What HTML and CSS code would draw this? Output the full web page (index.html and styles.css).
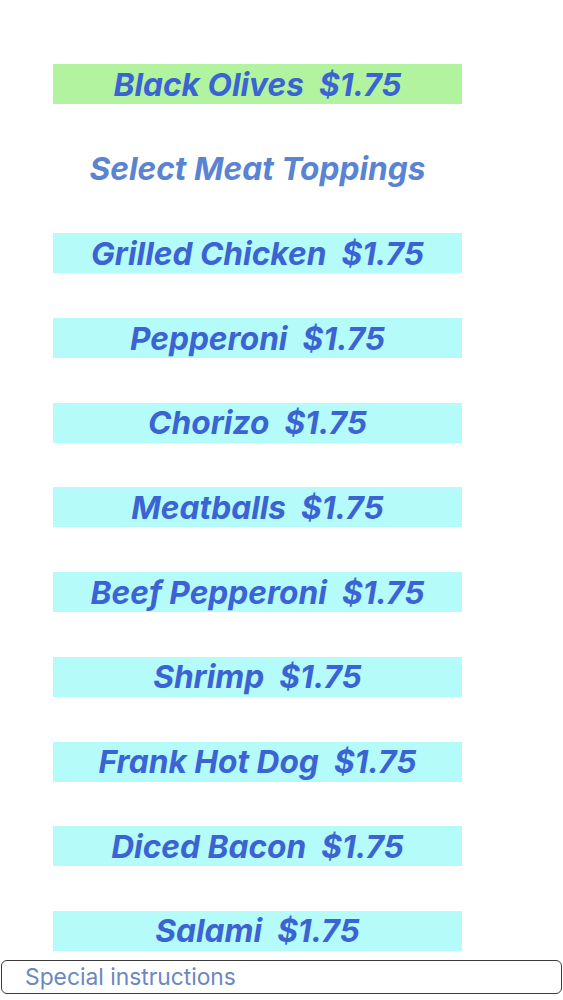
FILE: index.html
```html
<!DOCTYPE html>
<html>
<head>
<meta charset="utf-8">
<link rel="stylesheet" href="styles.css">
</head>
<body>
<div class="list">
  <div class="bar bar-green">Black Olives  $1.75</div>
  <div class="heading">Select Meat Toppings</div>
  <div class="bar">Grilled Chicken  $1.75</div>
  <div class="bar">Pepperoni  $1.75</div>
  <div class="bar">Chorizo  $1.75</div>
  <div class="bar">Meatballs  $1.75</div>
  <div class="bar">Beef Pepperoni  $1.75</div>
  <div class="bar">Shrimp  $1.75</div>
  <div class="bar">Frank Hot Dog  $1.75</div>
  <div class="bar">Diced Bacon  $1.75</div>
  <div class="bar">Salami  $1.75</div>
</div>
<div class="instructions">Special instructions</div>
</body>
</html>
```
FILE: styles.css
```css
html, body {
  margin: 0;
  padding: 0;
  background: #ffffff;
}
body {
  width: 563px;
  height: 1000px;
  overflow: hidden;
  font-family: Inter, "Liberation Sans", Arial, sans-serif;
}
.list {
  display: flex;
  flex-direction: column;
  gap: 44.7px;
  padding-top: 64px;
  padding-left: 53px;
  width: 409px;
}
.bar, .heading {
  height: 40px;
  display: flex;
  align-items: center;
  justify-content: center;
  white-space: pre;
  font-weight: bold;
  font-style: italic;
  font-size: 31.7px;
  color: #3b63d4;
}
.bar {
  background: #b4fbf9;
}
.bar-green {
  background: #b2f3a0;
}
.heading {
  color: #5a84d2;
}
.instructions {
  margin-top: 9px;
  margin-left: 1px;
  width: 561px;
  height: 34px;
  box-sizing: border-box;
  border: 1px solid #3a3a3a;
  border-radius: 6px;
  display: flex;
  align-items: center;
  padding-left: 23px;
  font-size: 22.8px;
  color: #6a88c2;
}
```
